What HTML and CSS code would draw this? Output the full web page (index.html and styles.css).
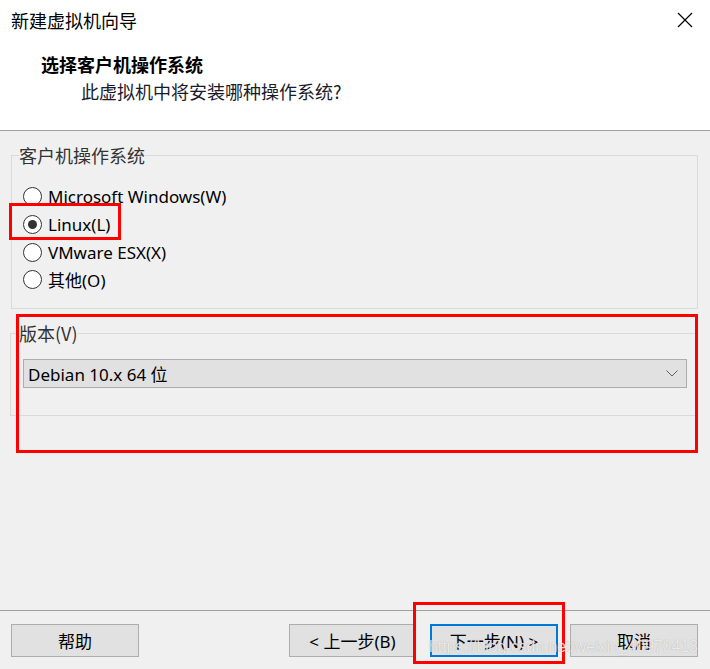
FILE: index.html
```html
<!DOCTYPE html>
<html lang="zh-CN">
<head>
<meta charset="utf-8">
<title>新建虚拟机向导</title>
<link rel="stylesheet" href="styles.css">
</head>
<body>
<div class="window">
  <header class="header">
    <div class="titlebar">
      <span class="title">新建虚拟机向导</span>
      <svg class="close" width="16" height="16" viewBox="0 0 16 16"><path d="M1 1 L15 15 M15 1 L1 15" stroke="#000" stroke-width="1.2" fill="none"/></svg>
    </div>
    <div class="heading">选择客户机操作系统</div>
    <div class="subheading">此虚拟机中将安装哪种操作系统?</div>
  </header>
  <main class="main">
    <fieldset class="group group-os">
      <legend class="legend">客户机操作系统</legend>
      <div class="radios">
        <label class="radio"><span class="dot"></span>Microsoft Windows(W)</label>
        <label class="radio checked"><span class="dot"></span>Linux(L)</label>
        <label class="radio"><span class="dot"></span>VMware ESX(X)</label>
        <label class="radio"><span class="dot"></span>其他(O)</label>
      </div>
    </fieldset>
    <fieldset class="group group-ver">
      <legend class="legend">版本(V)</legend>
      <div class="combo">
        <span>Debian 10.x 64 位</span>
        <svg class="chev" width="12" height="7" viewBox="0 0 12 7"><path d="M0.5 0.5 L6 6 L11.5 0.5" stroke="#606060" stroke-width="1" fill="none"/></svg>
      </div>
    </fieldset>
  </main>
  <footer class="footer">
    <button class="btn btn-help">帮助</button>
    <div class="nav">
      <button class="btn">&lt; 上一步(B)</button>
      <button class="btn btn-default">下一步(N) &gt;</button>
      <button class="btn">取消</button>
    </div>
  </footer>
  <div class="mark mark-linux"></div>
  <div class="mark mark-ver"></div>
  <div class="mark mark-next"></div>
  <div class="watermark">https://blog.csdn.net/weixin_40970413</div>
</div>
</body>
</html>
```
FILE: styles.css
```css
html, body {
  margin: 0;
  padding: 0;
}
body {
  width: 710px;
  height: 669px;
  overflow: hidden;
  background: #f0f0f0;
  font-family: "Noto Sans", "Noto Sans CJK SC", sans-serif;
  color: #000;
}
.window {
  position: relative;
  width: 710px;
  height: 669px;
  display: flex;
  flex-direction: column;
}
.header {
  background: #fff;
  height: 130px;
  border-bottom: 1px solid #a0a0a0;
  box-sizing: content-box;
}
.titlebar {
  display: flex;
  justify-content: space-between;
  align-items: center;
  height: 24px;
  padding: 8px 17px 0 11px;
}
.title {
  font-family: "Noto Sans CJK SC", sans-serif;
  font-size: 18px;
  line-height: 24px;
}
.close {
  display: block;
}
.heading {
  font-family: "Noto Sans CJK SC", sans-serif;
  font-weight: bold;
  font-size: 18px;
  line-height: 24px;
  margin: 20px 0 0 41px;
}
.subheading {
  font-family: "Noto Sans CJK SC", sans-serif;
  font-size: 18px;
  line-height: 24px;
  margin: 3px 0 0 81px;
  color: #1a1a2a;
}
.main {
  flex: 1;
  padding: 15px 12px 0 11px;
}
.group {
  margin: 0;
  padding: 0;
  border: 1px solid #dadada;
  box-sizing: border-box;
  min-width: 0;
}
.legend {
  font-family: "Noto Sans CJK SC", sans-serif;
  font-size: 18px;
  line-height: 18px;
  padding: 0;
  margin-left: 7px;
  color: #333;
}
.group-os {
  height: 163px;
}
.radios {
  display: flex;
  flex-direction: column;
  padding: 19px 0 0 11px;
}
.radio {
  display: flex;
  align-items: center;
  height: 27.7px;
  font-size: 17px;
  gap: 6px;
}
.dot {
  width: 17px;
  height: 17px;
  border: 1px solid #333;
  border-radius: 50%;
  background: #fff;
  display: flex;
  align-items: center;
  justify-content: center;
}
.checked .dot::after {
  content: "";
  width: 9px;
  height: 9px;
  border-radius: 50%;
  background: #333;
}
.group-ver {
  margin: 15px 0 0 -1px;
  height: 92px;
  padding: 0 10px 0 12px;
}
.group-ver .legend {
  margin-left: -4px;
}
.combo {
  margin-top: 17px;
  height: 29px;
  box-sizing: border-box;
  border: 1px solid #adadad;
  background: #e1e1e1;
  display: flex;
  align-items: center;
  justify-content: space-between;
  padding: 0 8px 0 4px;
  font-size: 17px;
}
.chev {
  display: block;
}
.footer {
  border-top: 1px solid #a0a0a0;
  height: 58px;
  box-sizing: content-box;
  padding: 0 12px 0 11px;
  display: flex;
  justify-content: space-between;
  align-items: flex-start;
}
.nav {
  display: flex;
  gap: 12px;
}
.btn {
  margin-top: 13px;
  width: 128px;
  height: 33px;
  box-sizing: border-box;
  border: 1px solid #adadad;
  background: #e1e1e1;
  font-family: "Noto Sans", "Noto Sans CJK SC", sans-serif;
  font-size: 17px;
  color: #000;
  padding: 0;
}
.nav .btn:first-child {
  width: 127px;
  margin-right: 2px;
}
.btn-default {
  border: 2px solid #0078d7;
}
.mark {
  position: absolute;
  border: 3px solid #ff0000;
  box-sizing: border-box;
  pointer-events: none;
}
.mark-linux {
  left: 9px;
  top: 203px;
  width: 112px;
  height: 37px;
}
.mark-ver {
  left: 16px;
  top: 314px;
  width: 682px;
  height: 139px;
}
.mark-next {
  left: 413px;
  top: 602px;
  width: 152px;
  height: 62px;
}
.watermark {
  position: absolute;
  left: 429px;
  top: 638px;
  font-family: "Liberation Sans", sans-serif;
  font-size: 15.8px;
  color: rgba(255, 255, 255, 0.75);
  text-shadow: 0 0 1px rgba(120, 120, 120, 0.6);
  pointer-events: none;
  white-space: nowrap;
}
```
